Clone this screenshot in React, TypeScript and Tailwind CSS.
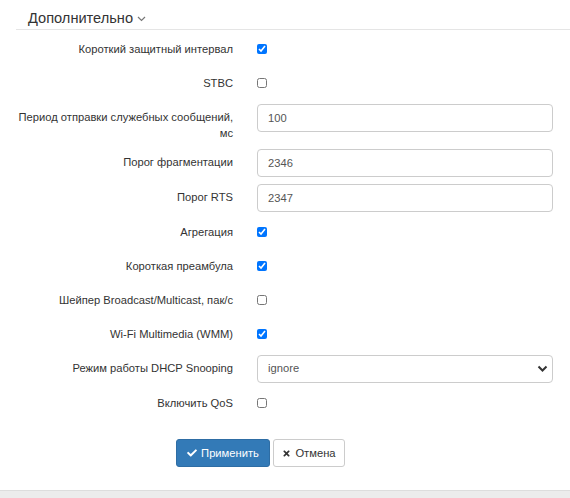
import React from "react";
import { FaCheck, FaTimes } from "react-icons/fa";

const font = { fontFamily: '"Liberation Sans", Arial, sans-serif' };

function CheckRow({ label, checked }: { label: string; checked?: boolean }) {
  return (
    <div className="flex h-[34px] items-center">
      <div className="w-[217px] shrink-0 text-right text-[11.2px] text-[#333]">{label}</div>
      <div className="ml-[24px] flex items-center">
        <input type="checkbox" defaultChecked={checked} className="m-0 h-[10px] w-[10px]" />
      </div>
    </div>
  );
}

function InputRow({ label, value, tall }: { label: React.ReactNode; value: string; tall?: boolean }) {
  return (
    <div className={`flex items-start pt-[4px] ${tall ? "h-[45px]" : "h-[35px]"}`}>
      <div className="w-[217px] shrink-0 pt-[5px] text-right text-[11.2px] leading-[16px] text-[#333]">{label}</div>
      <input
        defaultValue={value}
        className="ml-[24px] h-[28px] w-[296px] rounded-[4px] border border-[#ccc] bg-white px-[10px] text-[11.2px] text-[#555] outline-none"
        style={font}
      />
    </div>
  );
}

export default function App() {
  return (
    <div className="relative h-[498px] w-[570px] overflow-hidden bg-white" style={font}>
      <div className="pl-[16px]">
        <div className="flex h-[30px] items-center border-b border-[#e5e5e5] pl-[12px] pt-[6px]">
          <span className="text-[14.6px] leading-[20px] text-[#333]">Дополнительно</span>
          <svg width="9" height="6" viewBox="0 0 9 6" className="ml-[4px] mt-[3px]">
            <path d="M1 1 L4.5 4.5 L8 1" fill="none" stroke="#777" strokeWidth="1.2" />
          </svg>
        </div>
        <div className="pt-[2px]">
          <CheckRow label="Короткий защитный интервал" checked />
          <CheckRow label="STBC" />
          <InputRow
            tall
            value="100"
            label={
              <>
                Период отправки служебных сообщений,
                <br />
                мс
              </>
            }
          />
          <InputRow label="Порог фрагментации" value="2346" />
          <InputRow label="Порог RTS" value="2347" />
          <CheckRow label="Агрегация" checked />
          <CheckRow label="Короткая преамбула" checked />
          <CheckRow label="Шейпер Broadcast/Multicast, пак/с" />
          <CheckRow label="Wi-Fi Multimedia (WMM)" checked />
          <div className="flex h-[35px] items-center">
            <div className="w-[217px] shrink-0 text-right text-[11.2px] text-[#333]">Режим работы DHCP Snooping</div>
            <div className="relative ml-[24px] w-[296px]">
              <select
                defaultValue="ignore"
                className="h-[28px] w-full appearance-none rounded-[4px] border border-[#ccc] bg-white px-[10px] text-[11.2px] text-[#555] outline-none"
                style={font}
              >
                <option value="ignore">ignore</option>
              </select>
              <svg
                width="11"
                height="8"
                viewBox="0 0 11 8"
                className="pointer-events-none absolute right-[5px] top-[10px]"
              >
                <path d="M1.5 1.5 L5.5 5.5 L9.5 1.5" fill="none" stroke="#333" strokeWidth="2" />
              </svg>
            </div>
          </div>
          <CheckRow label="Включить QoS" />
        </div>
        <div className="mt-[19px] flex gap-[3px] pl-[160px]">
          <button className="flex h-[28px] w-[94px] items-center justify-center gap-[4px] rounded-[3px] border border-[#2e6da4] bg-[#337ab7] text-[11.2px] font-bold text-white">
            <FaCheck className="h-[10px] w-[10px]" />
            <span className="font-normal">Применить</span>
          </button>
          <button className="flex h-[28px] w-[72px] items-center justify-center gap-[4px] rounded-[3px] border border-[#ccc] bg-white text-[11.2px] text-[#333]">
            <FaTimes className="h-[9px] w-[9px]" />
            <span>Отмена</span>
          </button>
        </div>
      </div>
      <div className="absolute bottom-0 left-0 h-[8px] w-full border-t border-[#ddd] bg-[#ececec]" />
    </div>
  );
}
